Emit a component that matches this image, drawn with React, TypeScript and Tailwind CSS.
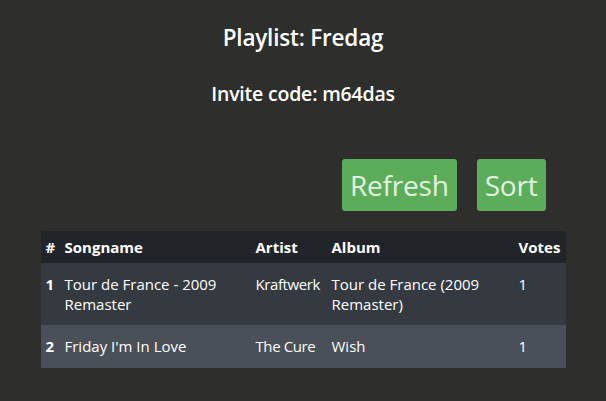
import React from "react";

type Song = {
   id: number;
   name: string;
   artist: string;
   album: string;
   votes: number;
};

const songs: Song[] = [
   { id: 1, name: "Tour de France - 2009 Remaster", artist: "Kraftwerk", album: "Tour de France (2009 Remaster)", votes: 1 },
   { id: 2, name: "Friday I'm In Love", artist: "The Cure", album: "Wish", votes: 1 },
];

export default function App() {
   return (
      <div
         className="min-h-[401px] bg-[#2e2f2c] text-white"
         style={{ fontFamily: '"Open Sans", "Noto Sans", sans-serif' }}
      >
         <div className="w-[525px] mx-auto pt-[23px]">
            <h2 className="text-center text-[22.5px] font-semibold leading-[30px] tracking-[-0.2px]">
               Playlist: Fredag
            </h2>
            <h4 className="text-center text-[19.5px] font-semibold leading-[26px] mt-[28px] tracking-[-0.2px]">
               Invite code: m64das
            </h4>
            <div className="flex justify-end gap-5 mr-5 mt-[52px]">
               <button className="bg-[#5cad5a] text-[#e4f1e0] text-[28px] leading-[52px] h-[52px] px-[8px] rounded-[3px] tracking-[-0.2px]">
                  Refresh
               </button>
               <button className="bg-[#5cad5a] text-[#e4f1e0] text-[28px] leading-[52px] h-[52px] px-[8px] rounded-[3px] tracking-[-0.2px]">
                  Sort
               </button>
            </div>
            <table className="w-full mt-[20px] table-fixed text-[15px]">
               <thead className="bg-[#212428]">
                  <tr className="h-[32px] text-left font-bold">
                     <th className="w-[20px] pl-[5px]">#</th>
                     <th className="w-[191px] pl-[4px]">Songname</th>
                     <th className="w-[76px] pl-[4px]">Artist</th>
                     <th className="w-[187px] pl-[4px]">Album</th>
                     <th className="pl-[4px]">Votes</th>
                  </tr>
               </thead>
               <tbody>
                  {songs.map((song, i) => (
                     <tr
                        key={song.id}
                        className={i % 2 === 0 ? "h-[43px] bg-[#343a40]" : "h-[43px] bg-[#495057]"}
                     >
                        <td className="pl-[5px] py-[11px] align-top leading-[20px] font-bold">{song.id}</td>
                        <td className="pl-[4px] py-[11px] align-top leading-[20px]">{song.name}</td>
                        <td className="pl-[4px] py-[11px] align-top leading-[20px] whitespace-nowrap tracking-[-0.4px]">{song.artist}</td>
                        <td className="pl-[4px] py-[11px] align-top leading-[20px]">{song.album}</td>
                        <td className="pl-[4px] py-[11px] align-top leading-[20px]">{song.votes}</td>
                     </tr>
                  ))}
               </tbody>
            </table>
         </div>
      </div>
   );
}
